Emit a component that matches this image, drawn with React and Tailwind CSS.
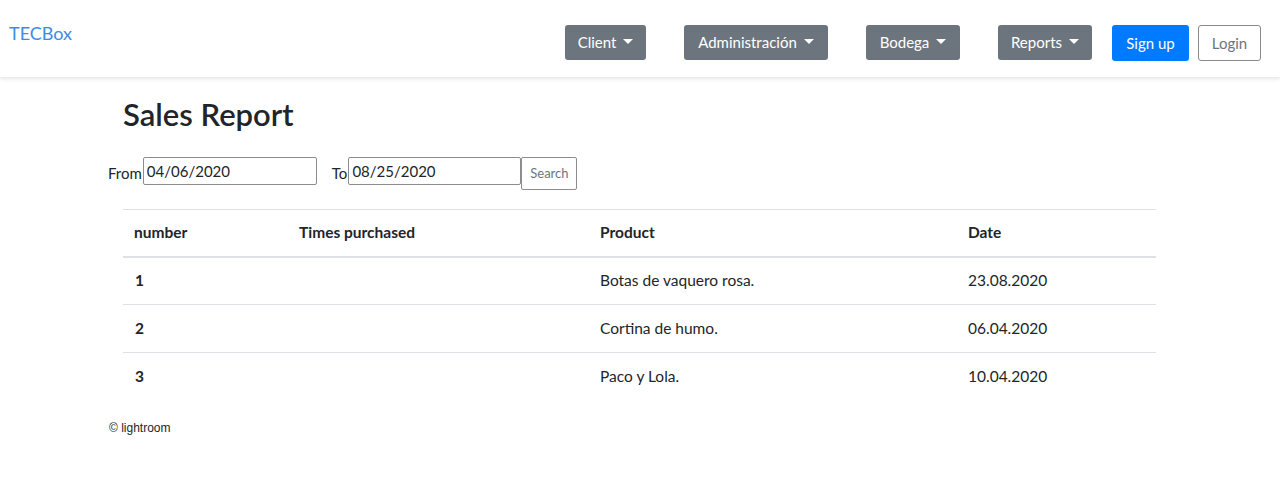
import React from "react";

const navMenus = [
  { label: "Client", w: "w-[81px]" },
  { label: "Administración", w: "w-[144px]" },
  { label: "Bodega", w: "w-[94px]" },
  { label: "Reports", w: "w-[94px]" },
];

const rows = [
  { n: "1", product: "Botas de vaquero rosa.", date: "23.08.2020" },
  { n: "2", product: "Cortina de humo.", date: "06.04.2020" },
  { n: "3", product: "Paco y Lola.", date: "10.04.2020" },
];

const Caret = () => (
  <span className="ml-[7px] inline-block w-0 h-0 border-l-[5px] border-r-[5px] border-t-[5px] border-l-transparent border-r-transparent border-t-white translate-y-[-1px]" />
);

export default function App() {
  return (
    <div className="min-h-screen bg-white text-[#212529] font-['Lato','Noto_Sans',sans-serif]">
      <nav className="h-[77px] flex items-start justify-between pl-[9px] pr-[19px] shadow-[0_2px_4px_rgba(0,0,0,0.1)]">
        <a className="mt-[20px] text-[18px] text-[#3c8ce7]">TECBox</a>
        <div className="flex items-center mt-[24px]">
          <div className="flex gap-[38px]">
            {navMenus.map((m) => (
              <button
                key={m.label}
                className={`${m.w} h-[35px] rounded-[3px] bg-[#6c757d] text-white text-[15px] flex items-center justify-center`}
              >
                {m.label}
                <Caret />
              </button>
            ))}
          </div>
          <button className="ml-[20px] mt-[1px] w-[77px] h-[36px] rounded-[3px] bg-[#007bff] text-white text-[15px]">
            Sign up
          </button>
          <button className="ml-[9px] mt-[1px] w-[63px] h-[36px] rounded-[3px] border border-[#8a8a8a] text-[#6c757d] text-[15px]">
            Login
          </button>
        </div>
      </nav>

      <main className="pl-[108px] pr-[124px]">
        <h1 className="ml-[15px] mt-[17px] text-[31px] font-semibold leading-[40px]">Sales Report</h1>
        <div className="mt-[23px] flex items-start text-[15px]">
          <label className="mt-[5px]">From</label>
          <input
            defaultValue="04/06/2020"
            className="ml-[1px] w-[174px] h-[28px] border border-[#8d8d8d] rounded-[2px] px-[3px] text-[15px]"
          />
          <label className="ml-[15px] mt-[5px]">To</label>
          <input
            defaultValue="08/25/2020"
            className="ml-[1px] w-[173px] h-[28px] border border-[#8d8d8d] rounded-[2px] px-[3px] text-[15px]"
          />
          <button className="w-[56px] h-[33px] border border-[#8d8d8d] rounded-[2px] text-[13px] text-[#6c757d] pt-[1px]">
            Search
          </button>
        </div>

        <table className="ml-[15px] mt-[19px] w-[1033px] text-[15.5px] border-collapse">
          <thead>
            <tr className="border-t border-[#dee2e6] border-b-2">
              <th className="w-[164px] h-[47px] px-[11px] text-left font-bold">number</th>
              <th className="w-[301px] px-[12px] text-left font-bold">Times purchased</th>
              <th className="w-[368px] px-[12px] text-left font-bold">Product</th>
              <th className="px-[12px] text-left font-bold">Date</th>
            </tr>
          </thead>
          <tbody>
            {rows.map((r, i) => (
              <tr key={r.n} className={i < rows.length - 1 ? "border-b border-[#dee2e6]" : ""}>
                <td className="h-[48px] px-[12px] font-bold">{r.n}</td>
                <td className="px-[12px]"></td>
                <td className="px-[12px]">{r.product}</td>
                <td className="px-[12px]">{r.date}</td>
              </tr>
            ))}
          </tbody>
        </table>

        <footer className="mt-[18px] ml-[1px] text-[12px] font-['Liberation_Sans',Arial,sans-serif]">
          © lightroom
        </footer>
      </main>
    </div>
  );
}
